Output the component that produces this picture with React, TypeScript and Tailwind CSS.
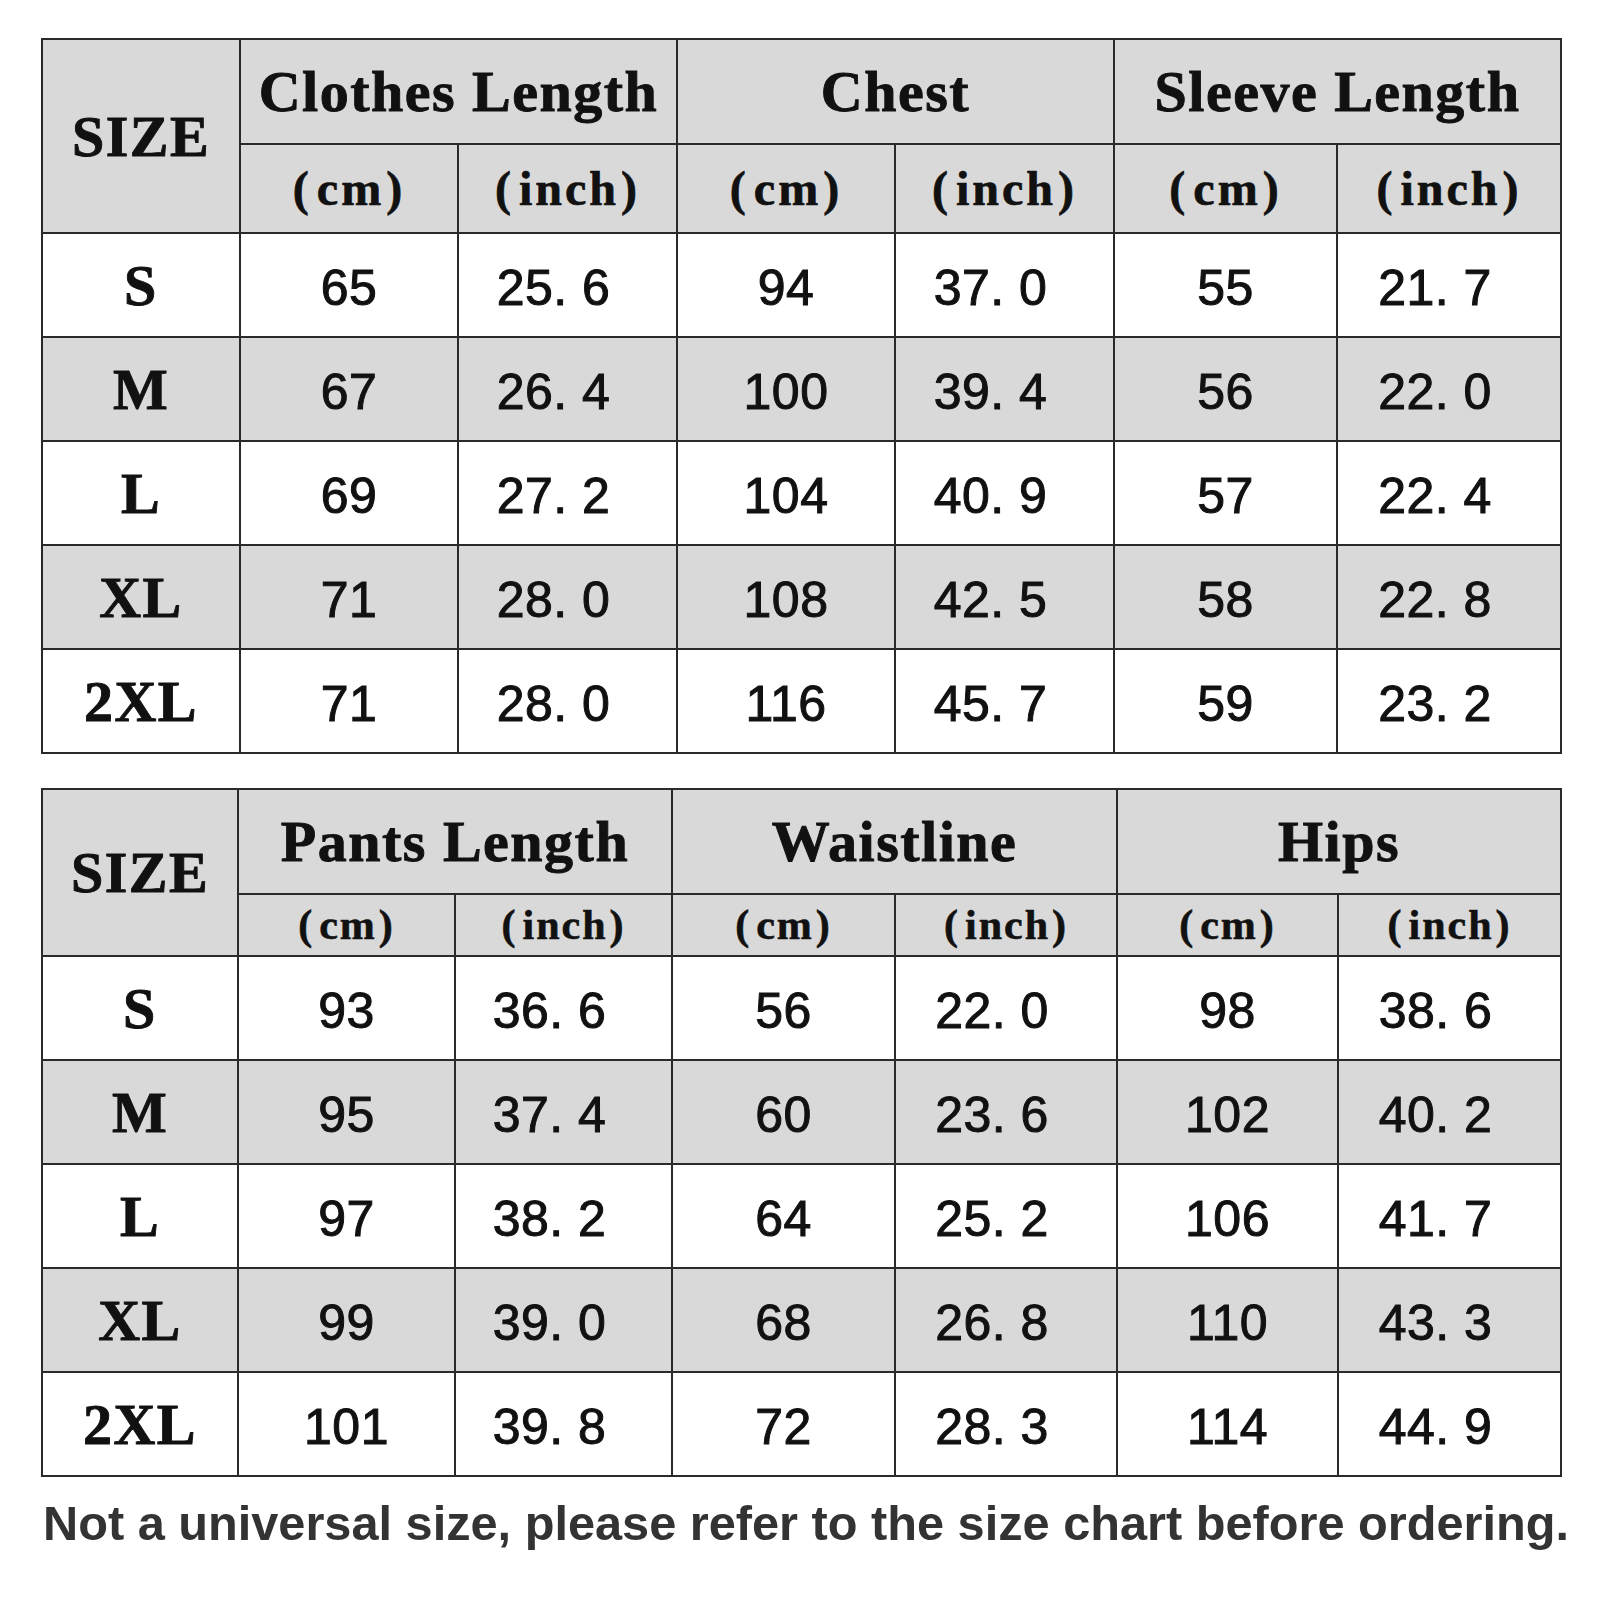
import React from "react";

interface SizeTableProps {
  heads: string[];
  cols: number[];
  unitRow: "tall" | "short";
  rows: { size: string; values: string[] }[];
}

const grey = "bg-[#d9d9d9]";

function Unit({ label, small }: { label: string; small: boolean }) {
  return (
    <span
      className={
        small
          ? "font-['Liberation_Serif',serif] font-bold text-[42px] tracking-[2px] text-[#111] [-webkit-text-stroke:0.6px_#111]"
          : "font-['Liberation_Serif',serif] font-bold text-[48px] tracking-[3px] text-[#111] [-webkit-text-stroke:0.7px_#111]"
      }
    >
      <span className="mr-[5px]">(</span>
      {label}
      <span className="ml-[2px]">)</span>
    </span>
  );
}

function SizeTable({ heads, cols, unitRow, rows }: SizeTableProps) {
  const small = unitRow === "short";
  return (
    <table className="table-fixed border-collapse border-2 border-[#2a2a2a]">
      <colgroup>
        {cols.map((w, i) => (
          <col key={i} style={{ width: w }} />
        ))}
      </colgroup>
      <thead>
        <tr className={`${grey} h-[105px]`}>
          <th
            rowSpan={2}
            className="border-2 border-[#2a2a2a] p-0 text-center font-['Liberation_Serif',serif] font-bold text-[58px] tracking-[1.5px] text-[#111] [-webkit-text-stroke:0.9px_#111]"
          >
            SIZE
          </th>
          {heads.map(h => (
            <th
              key={h}
              colSpan={2}
              className="border-2 border-[#2a2a2a] p-0 text-center font-['Liberation_Serif',serif] font-bold text-[58px] tracking-[1.5px] text-[#111] [-webkit-text-stroke:0.9px_#111]"
            >
              {h}
            </th>
          ))}
        </tr>
        <tr className={`${grey} ${small ? "h-[62px]" : "h-[89px]"}`}>
          {heads.map(h => (
            <React.Fragment key={h}>
              <th className="border-2 border-[#2a2a2a] p-0 text-center leading-none">
                <Unit label="cm" small={small} />
              </th>
              <th className="border-2 border-[#2a2a2a] p-0 text-center leading-none">
                <Unit label="inch" small={small} />
              </th>
            </React.Fragment>
          ))}
        </tr>
      </thead>
      <tbody>
        {rows.map((r, ri) => (
          <tr key={r.size} className={`h-[104px] ${ri % 2 === 1 ? grey : "bg-white"}`}>
            <td className="border-2 border-[#2a2a2a] p-0 text-center font-['Liberation_Serif',serif] font-bold text-[58px] tracking-[1.5px] text-[#111] [-webkit-text-stroke:0.9px_#111]">
              {r.size}
            </td>
            {r.values.map((v, vi) => (
              <td
                key={vi}
                className={`border-2 border-[#2a2a2a] p-0 pt-[6px] text-center font-['Liberation_Sans',Arial,sans-serif] text-[50px] tracking-[0.5px] text-[#111] [-webkit-text-stroke:1px_#111] ${
                  vi % 2 === 1 ? "pr-[28px]" : ""
                }`}
              >
                {v}
              </td>
            ))}
          </tr>
        ))}
      </tbody>
    </table>
  );
}

const topRows = [
  { size: "S", values: ["65", "25. 6", "94", "37. 0", "55", "21. 7"] },
  { size: "M", values: ["67", "26. 4", "100", "39. 4", "56", "22. 0"] },
  { size: "L", values: ["69", "27. 2", "104", "40. 9", "57", "22. 4"] },
  { size: "XL", values: ["71", "28. 0", "108", "42. 5", "58", "22. 8"] },
  { size: "2XL", values: ["71", "28. 0", "116", "45. 7", "59", "23. 2"] },
];

const bottomRows = [
  { size: "S", values: ["93", "36. 6", "56", "22. 0", "98", "38. 6"] },
  { size: "M", values: ["95", "37. 4", "60", "23. 6", "102", "40. 2"] },
  { size: "L", values: ["97", "38. 2", "64", "25. 2", "106", "41. 7"] },
  { size: "XL", values: ["99", "39. 0", "68", "26. 8", "110", "43. 3"] },
  { size: "2XL", values: ["101", "39. 8", "72", "28. 3", "114", "44. 9"] },
];

export default function App() {
  return (
    <div className="w-[1600px] h-[1600px] bg-white pt-[38px] pl-[41px]">
      <SizeTable
        heads={["Clothes Length", "Chest", "Sleeve Length"]}
        cols={[198, 218, 219, 218, 219, 223, 224]}
        unitRow="tall"
        rows={topRows}
      />
      <div className="h-[34px]" />
      <SizeTable
        heads={["Pants Length", "Waistline", "Hips"]}
        cols={[196, 217, 217, 223, 222, 221, 223]}
        unitRow="short"
        rows={bottomRows}
      />
      <p className="mt-[18px] ml-[2px] whitespace-nowrap font-['Liberation_Sans',Arial,sans-serif] font-bold text-[48.7px] leading-[56px] text-[#333]">
        Not a universal size, please refer to the size chart before ordering.
      </p>
    </div>
  );
}
